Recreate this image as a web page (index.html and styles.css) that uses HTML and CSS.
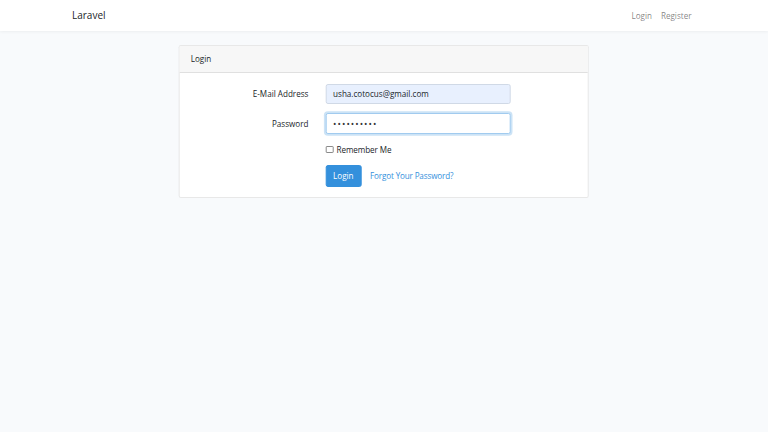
FILE: index.html
```html
<!DOCTYPE html>
<html lang="en">
<head>
<meta charset="utf-8">
<title>Laravel</title>
<link rel="stylesheet" href="styles.css">
</head>
<body>
<nav class="navbar">
  <div class="nav-inner">
    <a class="brand" href="#">Laravel</a>
    <div class="nav-links">
      <a class="nav-link" href="#">Login</a>
      <a class="nav-link" href="#">Register</a>
    </div>
  </div>
</nav>
<main class="main">
  <div class="card">
    <div class="card-header">Login</div>
    <div class="card-body">
      <div class="form-row">
        <label class="form-label" for="email">E-Mail Address</label>
        <div class="field"><input id="email" class="input autofill" type="email" value="usha.cotocus@gmail.com"></div>
      </div>
      <div class="form-row">
        <label class="form-label" for="password">Password</label>
        <div class="field"><input id="password" class="input focused" type="password" value="1234567890"></div>
      </div>
      <div class="form-row">
        <div class="form-label"></div>
        <div class="field">
          <label class="check"><span class="check-box"></span><span class="check-label">Remember Me</span></label>
        </div>
      </div>
      <div class="form-row last">
        <div class="form-label"></div>
        <div class="field actions">
          <button class="btn btn-primary" type="button">Login</button>
          <a class="btn btn-link" href="#">Forgot Your Password?</a>
        </div>
      </div>
    </div>
  </div>
</main>
</body>
</html>
```
FILE: styles.css
```css
* { box-sizing: border-box; }
html, body { margin: 0; padding: 0; }
body {
  background: #f8fafc;
  color: #212529;
  font-family: "Open Sans", "Liberation Sans", sans-serif;
  font-size: 8.1px;
  line-height: 13px;
  height: 432px;
}
a { text-decoration: none; }

.navbar {
  background: #fff;
  height: 31px;
  box-shadow: 0 1px 3px rgba(0,0,0,.05);
}
.nav-inner {
  width: 624px;
  margin: 0 auto;
  height: 31px;
  display: flex;
  align-items: center;
  justify-content: space-between;
}
.brand {
  color: #212529;
  font-size: 10px;
  line-height: 16px;
  margin-top: -1px;
}
.nav-links { display: flex; margin-top: -1px; }
.nav-link {
  color: rgba(0,0,0,.5);
  padding: 0 4.5px;
}

.main { padding-top: 13.5px; }

.card {
  width: 410.4px;
  margin: 0 auto;
  background: #fff;
  border: 1px solid rgba(0,0,0,.09);
  border-radius: 2.25px;
  transform: translateX(-0.3px);
}
.card-header {
  background: #f7f7f7;
  padding: 6.75px 11.25px;
  border-bottom: 1px solid rgba(0,0,0,.09);
  line-height: 13px;
}
.card-body { padding: 10.5px 11.25px 10.5px; }

.form-row {
  display: flex;
  align-items: center;
  gap: 16.9px;
  margin-bottom: 9px;
}
.form-row.last { margin-bottom: 0; }
.form-label {
  width: 117.7px;
  flex: none;
  text-align: right;
}
.field { width: 184.9px; flex: none; }

.input {
  display: block;
  width: 100%;
  height: 20.8px;
  padding: 3.4px 6.75px;
  font-family: inherit;
  font-size: 8.1px;
  color: #495057;
  background: #fff;
  border: 1px solid #d3d9df;
  border-radius: 2.25px;
  outline: none;
}
.input.autofill {
  background: #e8f0fe;
  color: #212529;
  border-color: #d0d9e6;
}
.input.focused {
  border-color: #a1cbef;
  box-shadow: 0 0 0 1.8px rgba(52,144,220,.25);
  font-size: 9px;
  letter-spacing: 1.05px;
  color: #333;
}

.check {
  display: flex;
  align-items: center;
  height: 13px;
}
.check-box {
  width: 7.5px;
  height: 7.5px;
  border: 1px solid #8a8a8a;
  border-radius: 1px;
  background: #fff;
  margin-left: 0.5px;
  margin-right: 3.3px;
}
.check-label { letter-spacing: -0.1px; }

.actions { display: flex; align-items: center; gap: 1px; }
.btn {
  display: inline-block;
  font-family: inherit;
  font-size: 8.1px;
  line-height: 13px;
  padding: 3.4px 6.75px;
  border: 1px solid transparent;
  border-radius: 2.25px;
  cursor: pointer;
}
.btn-primary {
  background: #3490dc;
  border-color: #3490dc;
  color: #fff;
}
.btn-link {
  color: #3490dc;
  background: transparent;
  letter-spacing: -0.15px;
}
```
